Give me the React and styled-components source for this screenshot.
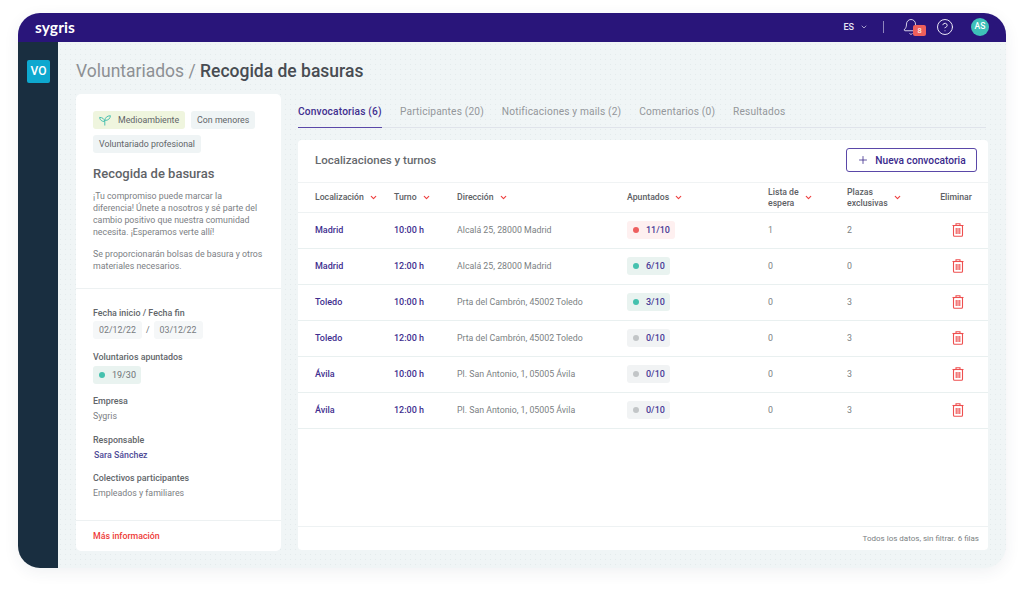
import React from 'react';
import styled, { createGlobalStyle } from 'styled-components';
import { ChevronDown, Plus, Bell, CircleHelp } from 'lucide-react';

const GlobalStyle = createGlobalStyle`
  html, body {
    margin: 0;
    background: #fff;
    font-family: Roboto, "Liberation Sans", sans-serif;
  }
  * { box-sizing: border-box; }
`;

const Page = styled.div`
  width: 1024px;
  height: 592px;
  padding: 13px 18px 24px;
  overflow: hidden;
`;

const Window = styled.div`
  width: 988px;
  height: 555px;
  border-radius: 22px;
  overflow: hidden;
  background: #f0f5f6;
  box-shadow: 0 4px 16px rgba(40, 60, 80, 0.07);
  display: flex;
  flex-direction: column;
`;

const TopBar = styled.header`
  height: 29px;
  flex: none;
  background: #29157a;
  display: flex;
  align-items: center;
  padding: 0 17px 2px 17px;
  color: #fff;
`;

const Logo = styled.div`
  font-family: Lato, sans-serif;
  font-size: 15.5px;
  font-weight: 700;
  letter-spacing: 0.1px;
`;

const Lang = styled.div`
  margin-left: auto;
  display: flex;
  align-items: center;
  gap: 6px;
  font-size: 9px;
  font-weight: 500;
  color: #e6e3f3;
`;

const BarDivider = styled.span`
  width: 1px;
  height: 12px;
  background: #8f86bd;
  margin: 0 18px 0 15px;
`;

const BellWrap = styled.div`
  position: relative;
  width: 28px;
  height: 18px;
  color: #e6e3f3;
`;

const BellBadge = styled.span`
  position: absolute;
  left: 11px;
  top: 7px;
  width: 13px;
  height: 11px;
  border-radius: 2px;
  background: #ee5f5b;
  color: #fff;
  font-size: 7.5px;
  line-height: 11px;
  text-align: center;
`;

const HelpIcon = styled(CircleHelp)`
  color: #eeeaf8;
  margin-left: 6px;
`;

const Avatar = styled.div`
  width: 18px;
  height: 18px;
  border-radius: 50%;
  background: #3ec0b8;
  color: #fff;
  font-size: 8.5px;
  font-weight: 500;
  line-height: 17px;
  text-align: center;
  margin-left: 17px;
`;

const Body = styled.div`
  flex: 1;
  min-height: 0;
  display: flex;
`;

const Sidebar = styled.aside`
  width: 40px;
  flex: none;
  background: #192e40;
  padding: 18px 9px 0;
`;

const ModuleTile = styled.div`
  width: 23px;
  height: 23px;
  border-radius: 2px;
  background: #0ea8cf;
  color: #fff;
  font-size: 12px;
  font-weight: 500;
  line-height: 23px;
  text-align: center;
`;

const Main = styled.main`
  flex: 1;
  min-width: 0;
  padding: 18px 18px 17px 18px;
  display: flex;
  flex-direction: column;
  background-image: radial-gradient(#e4ebec 0.5px, transparent 0.6px);
  background-size: 5px 5px;
`;

const PageTitle = styled.h1`
  margin: 0 0 12px;
  font-size: 17.5px;
  line-height: 22px;
  font-weight: 500;
  color: #484c52;
`;

const Crumb = styled.span`
  font-weight: 400;
  color: #8d9094;
`;

const Columns = styled.div`
  flex: 1;
  min-height: 0;
  display: flex;
  gap: 17px;
`;

const InfoCard = styled.section`
  width: 205px;
  flex: none;
  background: #fff;
  border-radius: 5px;
  display: flex;
  flex-direction: column;
`;

const InfoTop = styled.div`
  height: 195px;
  flex: none;
  padding: 17px 17px 0;
  border-bottom: 1px solid #edf1f2;
`;

const Tags = styled.div`
  display: flex;
  flex-wrap: wrap;
  gap: 6px;
`;

const Tag = styled.span`
  height: 18px;
  padding: 0 6px;
  border-radius: 3px;
  display: inline-flex;
  align-items: center;
  gap: 7px;
  font-size: 8.8px;
  color: #5f6468;
  background: ${(props) => (props.green ? '#eff5de' : '#eff4f5')};
`;

const CardTitle = styled.h2`
  margin: 12px 0 7px;
  font-size: 13px;
  line-height: 18px;
  font-weight: 500;
  color: #5f6367;
`;

const Paragraph = styled.p`
  margin: 0 0 10px;
  font-size: 8.8px;
  line-height: 12px;
  color: #7c8084;
`;

const InfoMiddle = styled.div`
  flex: 1;
  padding: 18px 17px 0;
`;

const Field = styled.div`
  display: flex;
  flex-direction: column;
  align-items: flex-start;
  margin-bottom: ${(props) => props.after || '12px'};
`;

const FieldLabel = styled.div`
  font-size: 8.9px;
  line-height: 12px;
  font-weight: 500;
  color: #62666a;
  margin-bottom: ${(props) => props.gap || '3px'};
`;

const FieldValue = styled.div`
  font-size: 8.8px;
  line-height: 12px;
  color: ${(props) => (props.link ? '#4f4c97' : '#7c8084')};
  padding-left: ${(props) => (props.link ? '1px' : '0')};
  font-weight: ${(props) => (props.link ? 500 : 400)};
`;

const DateRow = styled.div`
  display: flex;
  align-items: center;
  gap: 4px;
  font-size: 8.8px;
  color: #6e7276;
`;

const DateChip = styled.span`
  height: 18px;
  padding: 0 6px;
  border-radius: 3px;
  background: #f5f7f8;
  line-height: 18px;
  color: #777b7f;
`;

const InfoFoot = styled.div`
  height: 31px;
  flex: none;
  border-top: 1px solid #edf1f2;
  padding-left: 17px;
  font-size: 8.8px;
  font-weight: 500;
  line-height: 30px;
  color: #ee3b38;
`;

const Content = styled.section`
  flex: 1;
  min-width: 0;
  display: flex;
  flex-direction: column;
  margin-bottom: 1px;
`;

const Tabs = styled.nav`
  width: 688px;
  height: 34px;
  flex: none;
  display: flex;
  gap: 18px;
  border-bottom: 1px solid #dfe3ea;
  margin-bottom: 12px;
`;

const Tab = styled.div`
  height: 34px;
  padding-top: 11px;
  font-size: 10.2px;
  line-height: 13px;
  font-weight: ${(props) => (props.active ? 500 : 400)};
  letter-spacing: 0.15px;
  color: ${(props) => (props.active ? '#3f2f8f' : '#94979b')};
  border-bottom: ${(props) => (props.active ? '1px solid #5a48a8' : 'none')};
  ${(props) => props.active && 'width: 84px; white-space: nowrap;'}
`;

const TableCard = styled.div`
  flex: 1;
  min-height: 0;
  background: #fff;
  border-radius: 4px;
  display: flex;
  flex-direction: column;
`;

const CardHeader = styled.div`
  height: 42px;
  flex: none;
  display: flex;
  align-items: center;
  justify-content: space-between;
  padding: 0 11px 2px 17px;
`;

const CardHeading = styled.h3`
  margin: 0;
  font-size: 11.5px;
  font-weight: 500;
  color: #66696d;
`;

const PrimaryButton = styled.button`
  height: 24px;
  width: 131px;
  border: 1px solid #5a48a8;
  border-radius: 3px;
  background: #fff;
  color: #3a2a8c;
  font-family: inherit;
  font-size: 10.2px;
  font-weight: 500;
  display: flex;
  align-items: center;
  justify-content: center;
  gap: 6px;
  padding: 0;
`;

const Table = styled.table`
  width: 100%;
  border-collapse: collapse;
  table-layout: fixed;
`;

const Th = styled.th`
  height: 30px;
  padding: 0 ${(props) => props.right || '0'} 0 ${(props) => props.pad || '0'};
  border-top: 1px solid #f0f3f4;
  border-bottom: 1px solid #eef2f3;
  text-align: ${(props) => props.align || 'left'};
  font-size: 8.7px;
  line-height: 11px;
  font-weight: 500;
  color: #5c6064;
`;

const HeadInner = styled.span`
  display: inline-flex;
  align-items: center;
  gap: ${(props) => props.gap || '5px'};
`;

const Caret = styled(ChevronDown)`
  color: #ee3f3f;
  stroke-width: 3;
`;

const Tr = styled.tr`
  height: 36px;
  border-bottom: 1px solid #e9f0f0;
`;

const Td = styled.td`
  padding: 0 0 2px ${(props) => props.pad || '0'};
  font-size: ${(props) => (props.strong ? '9px' : '8.8px')};
  text-align: ${(props) => props.align || 'left'};
  color: ${(props) => (props.strong ? '#3f2f8f' : '#7b7f83')};
  font-weight: ${(props) => (props.strong ? 500 : 400)};
`;

const statusColors = {
  red: { bg: '#fef0f0', dot: '#ee5f5f' },
  green: { bg: '#e9f3f0', dot: '#45c1ae' },
  grey: { bg: '#f1f3f4', dot: '#c2c5c7' },
};

const StatusPill = styled.span`
  height: 18px;
  padding: 0 5px 0 6px;
  display: inline-flex;
  align-items: center;
  gap: 7px;
  border-radius: 3px;
  font-size: 9px;
  font-weight: ${(props) => (props.plain ? 400 : 500)};
  color: ${(props) => (props.plain ? '#6e7276' : '#4a3b97')};
  background: ${(props) => statusColors[props.status].bg};
`;

const Dot = styled.i`
  width: 6px;
  height: 6px;
  border-radius: 50%;
  background: ${(props) => statusColors[props.status].dot};
`;

const TrashSvg = styled.svg`
  display: block;
  width: 12px;
  height: 14px;
  margin-left: 12px;
  fill: none;
  stroke: #ee4f4f;
  stroke-width: 1.1;
`;

const SproutSvg = styled.svg`
  width: 12px;
  height: 11px;
  fill: none;
  stroke: #4cc0b0;
  stroke-width: 1;
`;

const Spacer = styled.div`
  flex: 1;
`;

const CardFooter = styled.div`
  height: 24px;
  flex: none;
  border-top: 1px solid #eef2f3;
  padding-right: 9px;
  text-align: right;
  font-size: 8px;
  line-height: 23px;
  color: #7b7f83;
`;

const TrashIcon = () => (
  <TrashSvg viewBox="0 0 12 14">
    <path d="M0.5 2.5h11" />
    <path d="M4 2.5V0.8h4v1.7" />
    <rect x="1.5" y="2.5" width="9" height="10.8" rx="1" />
    <path d="M4.2 5v6M6 5v6M7.8 5v6" />
  </TrashSvg>
);

const SproutIcon = () => (
  <SproutSvg viewBox="0 0 12 11">
    <path d="M5.8 10.5V6.5" />
    <path d="M5.8 6.5C5.4 3.8 3.4 2.4 0.6 2.4C0.8 5 2.8 6.6 5.8 6.5Z" />
    <path d="M5.8 5.4C6 2.8 8 0.8 11.4 0.7C11.3 3.6 9.2 5.6 5.8 5.4Z" />
  </SproutSvg>
);

const rows = [
  { place: 'Madrid', time: '10:00 h', address: 'Alcalá 25, 28000 Madrid', signed: '11/10', status: 'red', wait: 1, only: 2 },
  { place: 'Madrid', time: '12:00 h', address: 'Alcalá 25, 28000 Madrid', signed: '6/10', status: 'green', wait: 0, only: 0 },
  { place: 'Toledo', time: '10:00 h', address: 'Prta del Cambrón, 45002 Toledo', signed: '3/10', status: 'green', wait: 0, only: 3 },
  { place: 'Toledo', time: '12:00 h', address: 'Prta del Cambrón, 45002 Toledo', signed: '0/10', status: 'grey', wait: 0, only: 3 },
  { place: 'Ávila', time: '10:00 h', address: 'Pl. San Antonio, 1, 05005 Ávila', signed: '0/10', status: 'grey', wait: 0, only: 3 },
  { place: 'Ávila', time: '12:00 h', address: 'Pl. San Antonio, 1, 05005 Ávila', signed: '0/10', status: 'grey', wait: 0, only: 3 },
];

const tabs = ['Convocatorias (6)', 'Participantes (20)', 'Notificaciones y mails (2)', 'Comentarios (0)', 'Resultados'];

const App = () => (
  <Page>
    <GlobalStyle />
    <Window>
      <TopBar>
        <Logo>sygris</Logo>
        <Lang>ES <ChevronDown size={8} /></Lang>
        <BarDivider />
        <BellWrap>
          <Bell size={18} strokeWidth={1.2} />
          <BellBadge>8</BellBadge>
        </BellWrap>
        <HelpIcon size={18} strokeWidth={1.3} />
        <Avatar>AS</Avatar>
      </TopBar>
      <Body>
        <Sidebar>
          <ModuleTile>VO</ModuleTile>
        </Sidebar>
        <Main>
          <PageTitle><Crumb>Voluntariados / </Crumb>Recogida de basuras</PageTitle>
          <Columns>
            <InfoCard>
              <InfoTop>
                <Tags>
                  <Tag green><SproutIcon />Medioambiente</Tag>
                  <Tag>Con menores</Tag>
                  <Tag>Voluntariado profesional</Tag>
                </Tags>
                <CardTitle>Recogida de basuras</CardTitle>
                <Paragraph>¡Tu compromiso puede marcar la diferencia! Únete a nosotros y sé parte del cambio positivo que nuestra comunidad necesita. ¡Esperamos verte allí!</Paragraph>
                <Paragraph>Se proporcionarán bolsas de basura y otros materiales necesarios.</Paragraph>
              </InfoTop>
              <InfoMiddle>
                <Field>
                  <FieldLabel gap="2px">Fecha inicio / Fecha fin</FieldLabel>
                  <DateRow><DateChip>02/12/22</DateChip> / <DateChip>03/12/22</DateChip></DateRow>
                </Field>
                <Field after="11px">
                  <FieldLabel>Voluntarios apuntados</FieldLabel>
                  <StatusPill status="green" plain><Dot status="green" />19/30</StatusPill>
                </Field>
                <Field>
                  <FieldLabel>Empresa</FieldLabel>
                  <FieldValue>Sygris</FieldValue>
                </Field>
                <Field after="11px">
                  <FieldLabel>Responsable</FieldLabel>
                  <FieldValue link>Sara Sánchez</FieldValue>
                </Field>
                <Field>
                  <FieldLabel>Colectivos participantes</FieldLabel>
                  <FieldValue>Empleados y familiares</FieldValue>
                </Field>
              </InfoMiddle>
              <InfoFoot>Más información</InfoFoot>
            </InfoCard>
            <Content>
              <Tabs>
                {tabs.map((tab, i) => (
                  <Tab key={tab} active={i === 0}>{tab}</Tab>
                ))}
              </Tabs>
              <TableCard>
                <CardHeader>
                  <CardHeading>Localizaciones y turnos</CardHeading>
                  <PrimaryButton><Plus size={12} strokeWidth={1.6} />Nueva convocatoria</PrimaryButton>
                </CardHeader>
                <Table>
                  <colgroup>
                    <col width="96" />
                    <col width="63" />
                    <col width="170" />
                    <col width="141" />
                    <col width="79" />
                    <col width="93" />
                    <col width="48" />
                  </colgroup>
                  <thead>
                    <tr>
                      <Th pad="17px"><HeadInner>Localización <Caret size={9} /></HeadInner></Th>
                      <Th><HeadInner>Turno <Caret size={9} /></HeadInner></Th>
                      <Th><HeadInner>Dirección <Caret size={9} /></HeadInner></Th>
                      <Th><HeadInner>Apuntados <Caret size={9} /></HeadInner></Th>
                      <Th><HeadInner><span>Lista de<br />espera</span><Caret size={9} /></HeadInner></Th>
                      <Th><HeadInner><span>Plazas<br />exclusivas</span><Caret size={9} /></HeadInner></Th>
                      <Th right="16px" align="center">Eliminar</Th>
                    </tr>
                  </thead>
                  <tbody>
                    {rows.map((row, i) => (
                      <Tr key={i}>
                        <Td pad="17px" strong>{row.place}</Td>
                        <Td strong>{row.time}</Td>
                        <Td>{row.address}</Td>
                        <Td><StatusPill status={row.status}><Dot status={row.status} />{row.signed}</StatusPill></Td>
                        <Td>{row.wait}</Td>
                        <Td>{row.only}</Td>
                        <Td><TrashIcon /></Td>
                      </Tr>
                    ))}
                  </tbody>
                </Table>
                <Spacer />
                <CardFooter>Todos los datos, sin filtrar. 6 filas</CardFooter>
              </TableCard>
            </Content>
          </Columns>
        </Main>
      </Body>
    </Window>
  </Page>
);

export default App;
